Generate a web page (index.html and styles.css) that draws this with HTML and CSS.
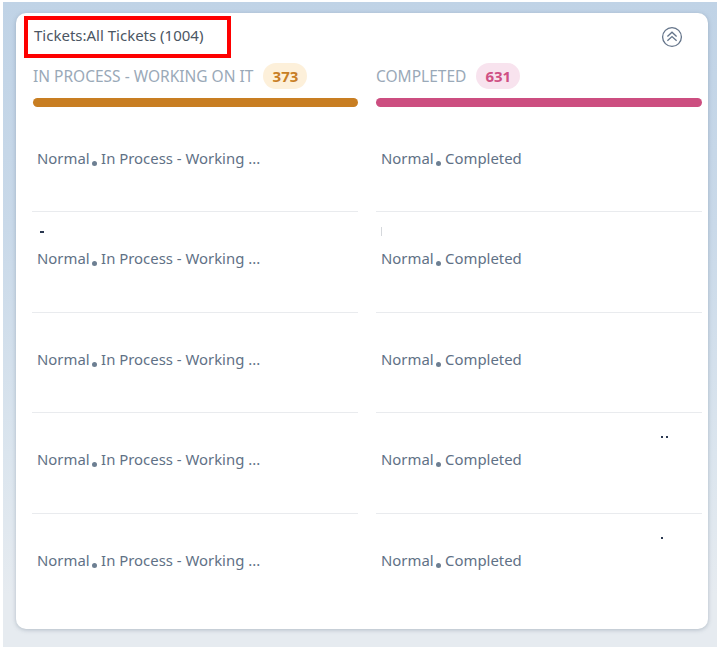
FILE: index.html
```html
<!DOCTYPE html>
<html lang="en">
<head>
<meta charset="utf-8">
<title>Tickets</title>
<link rel="stylesheet" href="styles.css">
</head>
<body>
<main class="stage">
  <section class="card">
    <header class="card-head">
      <h1 class="title">Tickets:All Tickets (1004)</h1>
      <svg class="collapse" viewBox="0 0 22 22" aria-label="Collapse">
        <circle cx="11" cy="11" r="9.4"/>
        <path d="M6.4 10.4 11 6.2 15.6 10.4M6.4 14.8 11 10.6 15.6 14.8"/>
      </svg>
    </header>
    <div class="board">
      <div class="col">
        <div class="col-head"><span class="col-name">IN PROCESS - WORKING ON IT</span><span class="count count-amber">373</span></div>
        <div class="bar bar-amber"></div>
        <div class="row"><span class="label">Normal</span><i class="dot"></i><span class="label">In Process - Working ...</span></div>
        <div class="row"><i class="speck speck-dash"></i><span class="label">Normal</span><i class="dot"></i><span class="label">In Process - Working ...</span></div>
        <div class="row"><span class="label">Normal</span><i class="dot"></i><span class="label">In Process - Working ...</span></div>
        <div class="row"><span class="label">Normal</span><i class="dot"></i><span class="label">In Process - Working ...</span></div>
        <div class="row row-last"><span class="label">Normal</span><i class="dot"></i><span class="label">In Process - Working ...</span></div>
      </div>
      <div class="col">
        <div class="col-head col-head-tight"><span class="col-name">COMPLETED</span><span class="count count-pink">631</span></div>
        <div class="bar bar-pink"></div>
        <div class="row"><span class="label">Normal</span><i class="dot"></i><span class="label">Completed</span></div>
        <div class="row"><i class="speck speck-line"></i><span class="label">Normal</span><i class="dot"></i><span class="label">Completed</span></div>
        <div class="row"><span class="label">Normal</span><i class="dot"></i><span class="label">Completed</span></div>
        <div class="row"><i class="speck speck-a"></i><i class="speck speck-b"></i><span class="label">Normal</span><i class="dot"></i><span class="label">Completed</span></div>
        <div class="row row-last"><i class="speck speck-c"></i><span class="label">Normal</span><i class="dot"></i><span class="label">Completed</span></div>
      </div>
    </div>
  </section>
</main>
</body>
</html>
```
FILE: styles.css
```css
* { box-sizing: border-box; }
html, body { margin: 0; height: 100%; background: #fff; }
body { font-family: "Noto Sans", "Liberation Sans", sans-serif; overflow: hidden; }
.stage {
  width: 717px;
  height: 645px;
  margin-top: 2px;
  margin-left: 3px;
  padding: 11px 0 0 13px;
  background: linear-gradient(180deg, #c0d3e6 0%, #c9d9e9 35%, #dbe5ee 70%, #e6ebf0 92%);
}
.card {
  width: 692px;
  height: 616px;
  background: #fff;
  border-radius: 10px;
  box-shadow: 0 1px 4px rgba(80, 100, 120, .35);
  padding-top: 3px;
}
.card-head { display: flex; justify-content: space-between; align-items: center; padding: 0 25px 0 8px; }
.title {
  margin: 0;
  width: 207px;
  height: 42px;
  border: 4px solid #fe0000;
  padding-left: 6px;
  font-size: 15px;
  font-weight: 400;
  line-height: 30px;
  color: #4b5663;
  white-space: nowrap;
}
.collapse { width: 22px; height: 22px; fill: none; stroke: #64748a; stroke-width: 1.3; }
.board { display: grid; grid-template-columns: 326px 326px; column-gap: 18px; padding-left: 16px; }
.col-head { display: flex; align-items: center; height: 26px; margin-top: 5px; padding-left: 1px; }
.col-head-tight { padding-left: 0; }
.col-name { font-size: 15.5px; line-height: 24px; margin-bottom: 1px; color: #9aa9b8; white-space: nowrap; }
.count {
  margin-left: 10px;
  width: 44px;
  height: 26px;
  border-radius: 13px;
  text-align: center;
  font-size: 15px;
  font-weight: 700;
  line-height: 26px;
}
.count-amber { background: #fdf0da; color: #c87e25; }
.count-pink { background: #f8e3ee; color: #cf4f84; }
.bar { height: 9px; margin: 9px 0 0 1px; border-radius: 5px; }
.bar-amber { background: #c87e22; }
.bar-pink { background: #cc4e80; margin-left: 0; }
.row {
  position: relative;
  display: flex;
  align-items: center;
  height: 100.5px;
  padding-left: 5px;
  padding-bottom: 7px;
  border-bottom: 1px solid #e9ebee;
  font-size: 14.9px;
  color: #5f7186;
}
.col > .bar + .row { height: 105px; padding-bottom: 3px; }
.row-last { border-bottom: 0; }
.label { white-space: nowrap; }
.dot {
  width: 5px;
  height: 5px;
  margin: 11px 4px 0 2.5px;
  border-radius: 50%;
  background: #6d7f92;
}
.speck { position: absolute; background: #2a3850; }
.speck-dash { left: 8px; top: 19px; width: 4px; height: 2px; }
.speck-line { left: 5px; top: 15px; width: 1px; height: 9px; background: #d5d8dc; }
.speck-a { left: 285px; top: 23px; width: 2px; height: 2px; }
.speck-b { left: 290px; top: 23px; width: 2px; height: 2px; }
.speck-c { left: 285px; top: 23px; width: 2px; height: 2px; }
```
